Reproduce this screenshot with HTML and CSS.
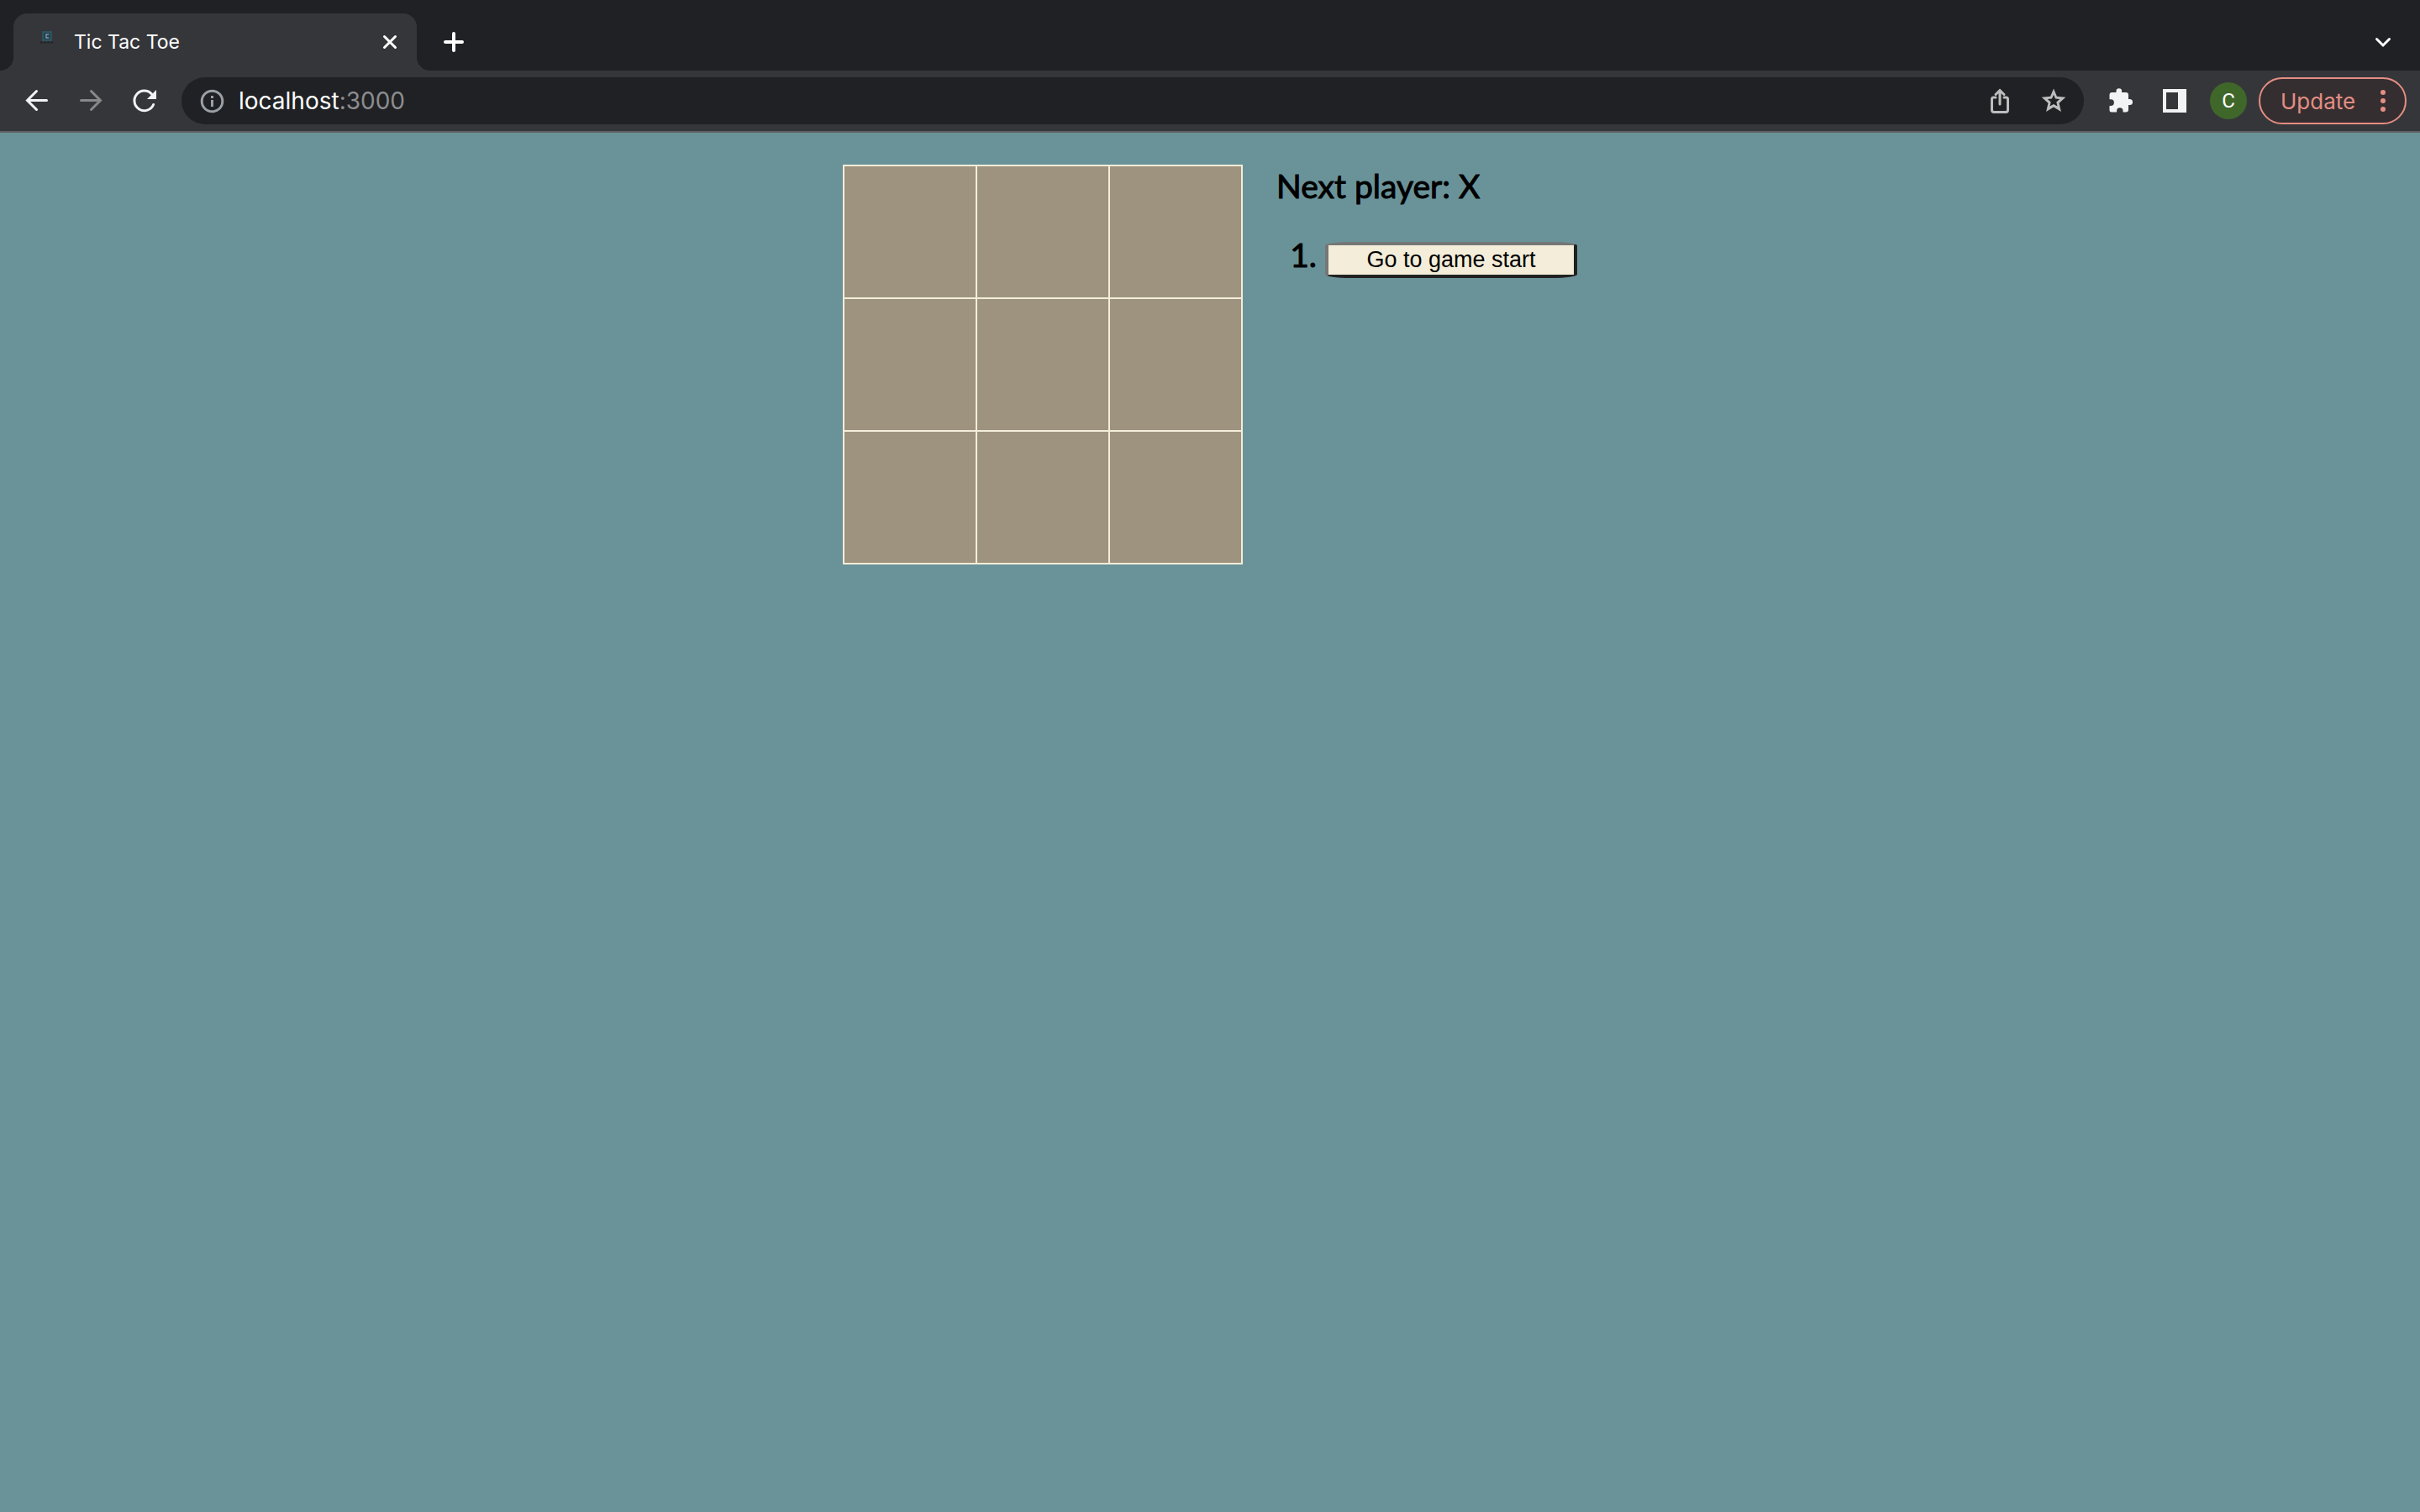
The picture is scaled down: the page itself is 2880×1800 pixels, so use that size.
FILE: index.html
```html
<!DOCTYPE html>
<html lang="en">
<head>
<meta charset="utf-8">
<title>Tic Tac Toe</title>
<link rel="stylesheet" href="styles.css">
</head>
<body>
<header class="browser">
  <div class="tab-strip">
    <div class="tab">
      <svg class="favicon" viewBox="0 0 32 32" aria-hidden="true">
        <rect x="11" y="8" width="10" height="10" fill="#27414b" stroke="#2d5c68" stroke-width="1.500"/>
        <path d="M17.500 11.500V11H15V15H17.500V14.500" fill="none" stroke="#7894ad" stroke-width="1.500"/>
        <path d="M8 20.500H24" stroke="#222327" stroke-width="2" stroke-dasharray="3 1"/>
      </svg>
      <span class="tab-title">Tic Tac Toe</span>
      <button class="tab-close" aria-label="Close tab">
        <svg viewBox="0 0 32 32"><path d="M9.500 9.500l13 13M22.500 9.500l-13 13"/></svg>
      </button>
    </div>
    <button class="strip-button" aria-label="New tab">
      <svg viewBox="0 0 32 32"><path d="M16 6v20M6 16h20"/></svg>
    </button>
    <button class="strip-button tab-search" aria-label="Search tabs">
      <svg viewBox="0 0 32 32"><path d="M8.500 12.500l7.500 7.500 7.500-7.500"/></svg>
    </button>
  </div>
  <div class="toolbar">
    <button class="tool" aria-label="Back">
      <svg viewBox="0 0 32 32"><path d="M27.500 15.500H4.500M15.500 4.500l-11 11 11 11"/></svg>
    </button>
    <button class="tool tool-disabled" aria-label="Forward" disabled>
      <svg viewBox="0 0 32 32"><path d="M4.500 15.500h23M16.500 4.500l11 11-11 11"/></svg>
    </button>
    <button class="tool" aria-label="Reload">
      <svg viewBox="0 0 32 32"><path d="M26.600 20.500A11.800 11.800 0 1 1 24.500 8"/><path class="solid" d="M30 3v11H19z"/></svg>
    </button>
    <div class="omnibox">
      <button class="site-info" aria-label="Site information">
        <svg viewBox="0 0 32 32"><circle cx="16.500" cy="16.500" r="12.300"/><path class="solid" d="M15 10h3v3h-3zM15 15h3v8h-3z"/></svg>
      </button>
      <a class="url" href="#">localhost<span class="port">:3000</span></a>
      <button class="tool omni-tool" aria-label="Share">
        <svg viewBox="0 0 32 32"><path d="M11 12H8.500Q6.500 12 6.500 14v13Q6.500 29.500 9 29.500h14Q25.500 29.500 25.500 27V14Q25.500 12 23.500 12H21M16 20V4M11 8.500l5-5 5 5"/></svg>
      </button>
      <button class="tool omni-tool" aria-label="Bookmark this tab">
        <svg viewBox="0 0 32 32"><path class="solid" fill-rule="evenodd" d="M16 1.500l3.900 9.300 10.400 1-7.800 7 2.400 10.200L16 23.600 7.100 29l2.400-10.200-7.800-7 10.400-1zM16 8.800l-2 4.800-5.200.5 3.900 3.400-1.200 5.100 4.500-2.700 4.500 2.700-1.200-5.100 3.900-3.400-5.200-.5z"/></svg>
      </button>
    </div>
    <button class="tool" aria-label="Extensions">
      <svg viewBox="0 0 32 32"><path class="solid" d="M10.500 5V4.500a3.300 3.300 0 0 1 6.600 0V6H22Q25 6 25 9v5h1.500a3.500 3.500 0 0 1 0 7H25v5.500q0 3-3 3h-3.500V28a3.700 3.700 0 0 0-7.400 0v1.500H5q-2.500 0-2.500-2.500v-5H4a3.900 3.900 0 0 0 0-7.800H2.500V9Q2.500 6 5.500 6h5z"/></svg>
    </button>
    <button class="tool" aria-label="Side panel">
      <svg viewBox="0 0 32 32"><path class="solid" fill-rule="evenodd" d="M2 2h28v28H2zM6 6v20h14V6z"/></svg>
    </button>
    <button class="tool" aria-label="Profile"><span class="avatar">C</span></button>
    <button class="update">
      Update
      <svg viewBox="0 0 32 32" aria-hidden="true"><circle cx="16" cy="6" r="3"/><circle cx="16" cy="16" r="3"/><circle cx="16" cy="26" r="3"/></svg>
    </button>
  </div>
</header>
<main class="game">
  <div class="board">
    <button class="square" aria-label="Square 1"></button>
    <button class="square" aria-label="Square 2"></button>
    <button class="square" aria-label="Square 3"></button>
    <button class="square" aria-label="Square 4"></button>
    <button class="square" aria-label="Square 5"></button>
    <button class="square" aria-label="Square 6"></button>
    <button class="square" aria-label="Square 7"></button>
    <button class="square" aria-label="Square 8"></button>
    <button class="square" aria-label="Square 9"></button>
  </div>
  <section class="game-info">
    <div class="status">Next player: X</div>
    <ol class="moves">
      <li><button class="move">Go to game start</button></li>
    </ol>
  </section>
</main>
</body>
</html>
```
FILE: styles.css
```css
* {
  box-sizing: border-box;
}

body {
  margin: 0;
  min-height: 100vh;
  background: #6a9399;
  color: #000;
  font-family: Lato, sans-serif;
}

button {
  margin: 0;
  padding: 0;
  border: 0;
  background: none;
  color: inherit;
  font: inherit;
}

/* Browser window */
.browser {
  background: #202124;
  color: #fff;
  font-family: Inter, sans-serif;
  border-bottom: 2px solid #5e6063;
}

.browser svg {
  display: block;
  width: 32px;
  height: 32px;
  flex: none;
  fill: none;
  stroke: currentColor;
  stroke-width: 3;
  stroke-linecap: round;
}

.browser svg .solid {
  fill: currentColor;
  stroke: none;
}

.tab-strip {
  display: flex;
  align-items: center;
  height: 84px;
  padding: 16px 16px 0;
}

.tab {
  position: relative;
  display: flex;
  align-items: center;
  width: 480px;
  height: 68px;
  padding: 0 16px 0 24px;
  border-radius: 16px 16px 0 0;
  background: #35363a;
}

/* Flared feet of the active tab */
.tab::before,
.tab::after {
  content: "";
  position: absolute;
  bottom: 0;
  width: 16px;
  height: 16px;
}

.tab::before {
  right: 100%;
  background: radial-gradient(circle at 0 0, transparent 16px, #35363a 16px);
}

.tab::after {
  left: 100%;
  background: radial-gradient(circle at 100% 0, transparent 16px, #35363a 16px);
}

.browser .favicon {
  margin: 0 16px 8px 0;
  stroke: none;
  stroke-linecap: butt;
}

.tab-title {
  flex: 1;
  font-size: 23px;
}

.strip-button {
  display: grid;
  place-items: center;
  width: 56px;
  height: 56px;
  margin-left: 16px;
}

.strip-button svg {
  stroke-width: 4;
}

.strip-button.tab-search {
  margin-left: auto;
}

.tab-search svg {
  stroke-width: 3;
}

.toolbar {
  display: flex;
  align-items: center;
  height: 72px;
  padding: 0 16px 0 12px;
  background: #35363a;
}

.tool {
  display: grid;
  place-items: center;
  flex: none;
  width: 64px;
  height: 56px;
  color: #f1f3f4;
}

.tool-disabled {
  color: #87888a;
}

.omnibox {
  display: flex;
  align-items: center;
  flex: 1;
  height: 56px;
  margin: 0 12px;
  padding: 0 4px 0 20px;
  border-radius: 28px;
  background: #202124;
}

.site-info {
  color: #9aa0a6;
}

.url {
  flex: 1;
  margin-left: 16px;
  color: #fff;
  font-size: 28px;
  text-decoration: none;
}

.port {
  color: #8c8d8f;
}

.omni-tool {
  color: #bdbdbe;
}

.avatar {
  width: 44px;
  border-radius: 50%;
  background: #40672a;
  color: #fff;
  font-family: Roboto, sans-serif;
  font-size: 24px;
  line-height: 44px;
}

.update {
  display: flex;
  align-items: center;
  justify-content: space-between;
  width: 176px;
  height: 56px;
  margin-left: 4px;
  padding: 0 10px 0 24px;
  border: 2px solid #e48e84;
  border-radius: 28px;
  background: #352e30;
  color: #e48e84;
  font-size: 26px;
}

.update svg {
  fill: currentColor;
  stroke: none;
}

/* Game */
.game {
  display: flex;
  justify-content: center;
  gap: 40px;
  padding: 38px 40px;
}

.board {
  display: grid;
  grid-template-columns: repeat(3, 156px);
  grid-auto-rows: 156px;
  gap: 2px;
  align-self: flex-start;
  border: 2px solid #f3edd9;
  background: #f3edd9;
}

.square {
  background: #9e937f;
}

.game-info {
  font-size: 39px;
  line-height: 50px;
  -webkit-text-stroke: 1px currentColor;
}

.moves {
  margin: 32px 0;
  padding-left: 58px;
}

.move {
  display: block;
  width: 300px;
  height: 43px;
  margin-top: 10px;
  border: 4px solid;
  border-color: #767676 #212121 #212121 #767676;
  border-radius: 10%;
  background: #f3edd9;
  color: #000;
  font-family: "Liberation Sans", sans-serif;
  font-size: 27px;
  line-height: 35px;
  -webkit-text-stroke: 0;
}
```
